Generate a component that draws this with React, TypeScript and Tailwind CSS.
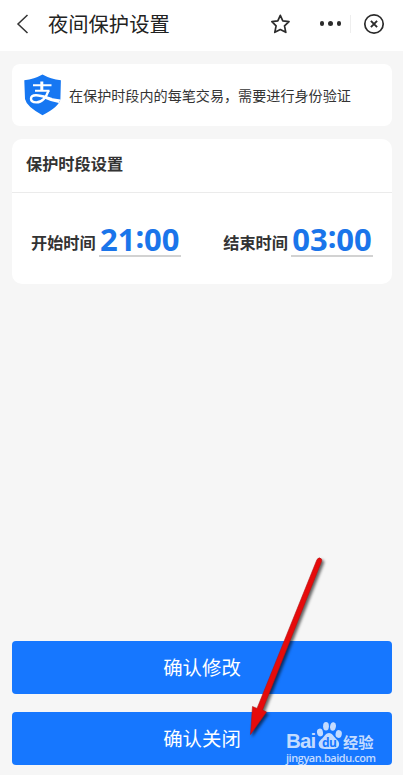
type TimeFieldProps = {
  label: string;
  hours: string;
  minutes: string;
};

function BackIcon() {
  return (
    <svg width="14" height="22" viewBox="0 0 14 22" fill="none" stroke="#333" strokeWidth="1.5">
      <path d="M11.5 2 2 11l9.500 9" />
    </svg>
  );
}

function StarIcon() {
  return (
    <svg width="20" height="20" viewBox="0 0 20 20" fill="none" stroke="#2b2b2b" strokeWidth="1.700" strokeLinejoin="round">
      <path d="m9.300 1.300 2.500 5.500 6.200.8-4.500 4.200 1.300 6.500-5.500-2.700-5.500 2.700 1.300-6.500L.9 7.600l5.900-.8Z" />
    </svg>
  );
}

function CloseIcon() {
  return (
    <svg width="22" height="22" viewBox="0 0 22 22" fill="none" stroke="#2b2b2b" strokeWidth="1.700">
      <circle cx="11" cy="11" r="9.200" />
      <path d="m7.900 7.900 6.200 6.200m0-6.200-6.200 6.200" strokeWidth="1.900" />
    </svg>
  );
}

function ShieldLogo() {
  return (
    <svg width="38" height="42" viewBox="0 0 38 42" fill="none">
      <path
        d="M18.500.5Q26.500 5 36.900 6.200L36.400 25Q35.500 32.500 18.500 41.200 2.500 32.500 1 25L.3 6.200Q10.500 5 18.500.5Z"
        fill="#1677f2"
      />
      <g stroke="#fff">
        <path d="M9 11.300h18.500M11 16.700h14.500" strokeWidth="2" />
        <path d="M17.800 7.500v9.500" strokeWidth="3" />
        <path
          d="M24.500 16.700c-2 6-6.300 11.700-12.200 11.700-3.400 0-5.300-1.300-5.300-3.600 0-2.200 2-3.500 5-3.500 5.500 0 10 2 15.500 3.700"
          strokeWidth="2.400"
        />
      </g>
      <path d="M19 21.500Q27.500 25 36.500 25.400L34.800 29Q26.500 27.500 19 24Z" fill="#fff" />
    </svg>
  );
}

function TimeField({ label, hours, minutes }: TimeFieldProps) {
  return (
    <div className="flex items-start gap-[3px]">
      <span className="mt-[7.500px] text-[16.200px] leading-6 font-bold text-[#333]">{label}</span>
      <span className="flex h-[35px] w-[82px] justify-center border-b-2 border-[#d2d2d2] font-['Noto_Sans'] text-[31px] leading-[34px] font-bold text-[#1a75ea]">
        {hours}
        <span className="-mt-[3px]">:</span>
        {minutes}
      </span>
    </div>
  );
}

function Watermark() {
  return (
    <div className="absolute top-[720px] left-[286px] h-[46px] w-[92px] font-['Open_Sans'] text-[#c4dcff]">
      <span className="absolute top-[13px] left-0 font-['Liberation_Sans'] text-[20.500px] leading-[15px] font-bold tracking-[-0.900px]">
        Bai
      </span>
      <svg className="absolute top-[2px] left-[30px]" width="27" height="28" viewBox="0 0 27 28" fill="currentColor">
        <ellipse cx="4" cy="10.500" rx="3" ry="3.900" transform="rotate(-12 4 10.500)" />
        <ellipse cx="10" cy="4.300" rx="2.900" ry="4.200" />
        <ellipse cx="17" cy="4.500" rx="2.900" ry="4.200" transform="rotate(10 17 4.500)" />
        <ellipse cx="22.700" cy="12" rx="3.100" ry="3.900" transform="rotate(12 22.700 12)" />
        <path d="M13 11c3 0 4.300 3 6.500 5.200 2.500 2.500 4.200 4 3.500 7-.7 3-3 3.800-9.700 3.800S3.500 26.500 2.800 23.200c-.7-3.200 1.200-4.700 3.700-7C8.700 14 10 11 13 11Z" />
      </svg>
      <span className="absolute top-[17px] left-[36px] text-[12px] leading-[12px] font-bold tracking-[-0.500px] text-[#1677ff]">
        du
      </span>
      <span className="absolute top-[14px] left-[57px] font-['Noto_Sans_CJK_SC'] text-[15.300px] leading-[15px] font-bold">
        经验
      </span>
      <span className="absolute top-[32px] left-0 text-[11px] leading-[12px] font-semibold tracking-[-0.450px]">
        jingyan.baidu.com
      </span>
    </div>
  );
}

function Arrow() {
  return (
    <svg
      className="pointer-events-none absolute top-[550px] left-[240px] drop-shadow-[2px_2px_1.500px_rgba(0,0,0,0.6)]"
      width="90"
      height="195"
      viewBox="0 0 90 195"
    >
      <path
        d="M77 9.500q2-3 4.500-.5.500 1.300 0 2.500L22.500 160l4 2-16 22.500L12.500 156.500l4.500 2Z"
        fill="#e60b0b"
        stroke="#b51212"
        strokeWidth=".6"
      />
    </svg>
  );
}

export default function App() {
  return (
    <div className="relative flex h-[775px] w-[403px] flex-col overflow-hidden bg-[#f6f6f6] font-['Noto_Sans_CJK_SC',sans-serif] text-[#333]">
      <header className="flex h-[51px] shrink-0 items-center bg-white pb-[4px] pl-4">
        <BackIcon />
        <h1 className="mb-px ml-[18px] text-[20.300px] leading-7 text-[#222]">夜间保护设置</h1>
        <div className="mr-[18px] ml-auto flex items-center">
          <StarIcon />
          <div className="ml-[29px] flex gap-[4px]">
            <span className="size-[4.500px] rounded-full bg-[#2b2b2b]" />
            <span className="size-[4.500px] rounded-full bg-[#2b2b2b]" />
            <span className="size-[4.500px] rounded-full bg-[#2b2b2b]" />
          </div>
          <span className="mr-3 ml-[9px] h-[18px] w-px bg-[#eee]" />
          <CloseIcon />
        </div>
      </header>

      <main className="flex flex-1 flex-col pt-[13px] pr-[11px] pb-[9.700px] pl-3">
        <section className="flex h-[62px] items-center rounded-lg bg-white pl-3">
          <ShieldLogo />
          <p className="mt-px ml-[7px] text-[14.100px] whitespace-nowrap">在保护时段内的每笔交易，需要进行身份验证</p>
        </section>

        <section className="mt-[13px] h-[144.500px] rounded-[10px] bg-white">
          <h2 className="flex h-[54px] items-center border-b border-[#ebebeb] pb-[4px] pl-[14px] text-[16.200px] font-bold">
            保护时段设置
          </h2>
          <div className="flex justify-between px-[19px] pt-[29px]">
            <TimeField label="开始时间" hours="21" minutes="00" />
            <TimeField label="结束时间" hours="03" minutes="00" />
          </div>
        </section>

        <div className="mt-auto flex flex-col gap-[18px]">
          <button className="h-[53px] rounded-[4px] bg-[#1677ff] pb-[2px] text-[19.400px] text-white">确认修改</button>
          <button className="h-[53px] rounded-[4px] bg-[#1677ff] pb-[2px] text-[19.400px] text-white">确认关闭</button>
        </div>
      </main>

      <Watermark />
      <Arrow />
    </div>
  );
}
